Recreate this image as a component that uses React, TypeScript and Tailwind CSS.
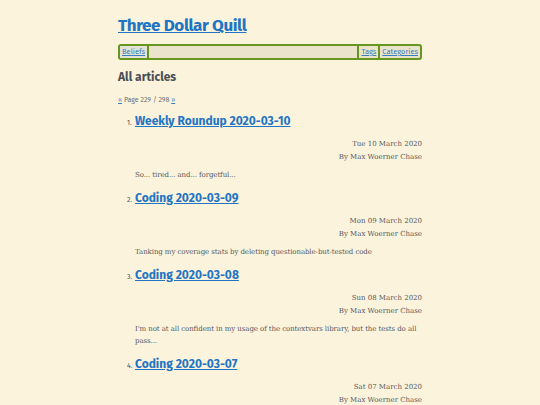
const posts = [
  {
    title: "Weekly Roundup 2020-03-10",
    date: "Tue 10 March 2020",
    summary: "So... tired... and... forgetful...",
  },
  {
    title: "Coding 2020-03-09",
    date: "Mon 09 March 2020",
    summary: "Tanking my coverage stats by deleting questionable-but-tested code",
  },
  {
    title: "Coding 2020-03-08",
    date: "Sun 08 March 2020",
    summary:
      "I'm not at all confident in my usage of the contextvars library, but the tests do all pass...",
  },
  {
    title: "Coding 2020-03-07",
    date: "Sat 07 March 2020",
    summary: "More refactoring, and some thoughts about what comes next...",
  },
];

const sans = "font-['Fira_Sans','Open_Sans','Noto_Sans',sans-serif]";

export default function App() {
  return (
    <div className="min-h-screen bg-[#fcf3dc] text-[#4a4f55]">
      <div className="mx-auto w-[304px] pt-[15px]">
        <h1 className={`${sans} text-[17px] font-bold leading-[22px] tracking-[-0.4px]`}>
          <a href="#" className="text-[#1f75c4] underline">
            Three Dollar Quill
          </a>
        </h1>

        <nav
          className={`${sans} mt-[7px] flex h-[16px] items-stretch rounded-[3px] border-2 border-[#67961c] bg-[#ebe3cc] text-[7.5px] leading-[12px]`}
        >
          <a href="#" className="border-r-2 border-[#67961c] bg-[#e3e2d6] px-[2px] text-[#3a7dc0] underline">
            Beliefs
          </a>
          <div className="flex-1 border-r-2 border-[#67961c]" />
          <a href="#" className="border-r-2 border-[#67961c] px-[2px] text-[#3a7dc0] underline">
            Tags
          </a>
          <a href="#" className="px-[2px] text-[#3a7dc0] underline">
            Categories
          </a>
        </nav>

        <h2 className={`${sans} mt-[9px] text-[12px] font-bold leading-[16px]`}>All articles</h2>

        <p className={`${sans} mt-[10px] text-[7px] leading-[10px] text-[#6b6f73]`}>
          <a href="#" className="text-[#3a7dc0] underline">«</a> Page 229 / 298{" "}
          <a href="#" className="text-[#3a7dc0] underline">»</a>
        </p>

        <ol className="mt-[7px] pl-[17px]">
          {posts.map((post, i) => (
            <li key={post.title} className="mb-[8px]">
              <div className="flex items-baseline">
                <span className={`${sans} -ml-[8px] w-[8px] text-[7px]`}>{i + 1}.</span>
                <a
                  href="#"
                  className={`${sans} text-[12px] font-bold leading-[18px] text-[#1f75c4] underline`}
                >
                  {post.title}
                </a>
              </div>
              <div className="mt-[8px] text-right font-['DejaVu_Serif',serif] text-[7px] leading-[12.5px] text-[#55595d]">
                <div>{post.date}</div>
                <div>By Max Woerner Chase</div>
              </div>
              <p className="mt-[6px] font-['DejaVu_Serif',serif] text-[7px] leading-[12px] tracking-[-0.08px] text-[#55595d]">
                {post.summary}
              </p>
            </li>
          ))}
        </ol>
      </div>
    </div>
  );
}
